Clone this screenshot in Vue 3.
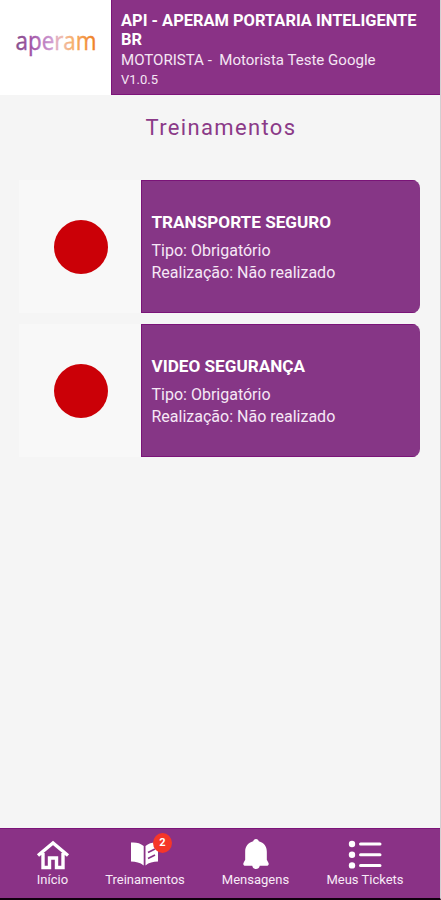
<template>
  <div class="screen">
    <header class="header">
      <div class="logo">
        <svg width="84" height="40" viewBox="0 0 84 40" role="img" aria-label="aperam">
          <defs>
            <linearGradient id="brand" gradientUnits="userSpaceOnUse" x1="1" y1="0" x2="82" y2="0">
              <stop offset="0" stop-color="#87528a" />
              <stop offset="0.2" stop-color="#a052a6" />
              <stop offset="0.45" stop-color="#cf9bd2" />
              <stop offset="0.58" stop-color="#efbcae" />
              <stop offset="0.72" stop-color="#f7b06a" />
              <stop offset="1" stop-color="#ee7c22" />
            </linearGradient>
          </defs>
          <text class="brand" x="1.500" y="28" textLength="81" lengthAdjust="spacingAndGlyphs">aperam</text>
        </svg>
      </div>
      <div class="info">
        <h1>API - APERAM PORTARIA INTELIGENTE BR</h1>
        <p class="user">MOTORISTA -&nbsp; Motorista Teste Google</p>
        <p class="version">V1.0.5</p>
      </div>
    </header>

    <main class="content">
      <h2>Treinamentos</h2>
      <div class="card" v-for="item in trainings" :key="item.title">
        <div class="status"><span class="dot"></span></div>
        <div class="details">
          <h3>{{ item.title }}</h3>
          <p>Tipo: {{ item.type }}</p>
          <p>Realização: {{ item.status }}</p>
        </div>
      </div>
    </main>

    <nav class="tabs">
      <a class="tab home">
        <svg width="34" height="32" viewBox="0 0 34 32">
          <path d="M2 16.500 17 4l15 12.500M7 14v14.500h6.500v-9.500h7v9.500H27V14" fill="none" stroke="#fff" stroke-width="3.400" />
        </svg>
        <span>Início</span>
      </a>
      <a class="tab trainings">
        <svg width="34" height="32" viewBox="0 0 34 32">
          <path d="M3 3.500C8 3 12 4 15.700 7v19.500C12 23.500 8 22.500 3 22.500zM17.500 7C21 4 25 3 30 3.500v19c-5 0-9 1-12.500 4z" fill="#fff" />
          <path d="m20 13.500 7-3.500M20 19.500l7-3.500" stroke="#8a3286" stroke-width="1.800" />
        </svg>
        <b class="badge">2</b>
        <span>Treinamentos</span>
      </a>
      <a class="tab messages">
        <svg width="34" height="34" viewBox="0 0 34 34">
          <path d="M17 0c1.700 0 2.700 1 3 2.500 5.500 1.500 8.500 5.500 8.500 11V22l1.800 3.500c.6 1.800-.2 3-2 3h-7.300C20.500 31 19 32 17 32s-3.500-1-4-3.500H5.700c-1.800 0-2.600-1.200-2-3L5.500 22v-8.500C5.500 8 8.500 4 14 2.500 14.300 1 15.300 0 17 0z" fill="#fff" />
        </svg>
        <span>Mensagens</span>
      </a>
      <a class="tab tickets">
        <svg width="34" height="32" viewBox="0 0 34 32">
          <g fill="#fff">
            <circle cx="4" cy="5" r="3.200" />
            <circle cx="4" cy="15.700" r="3.200" />
            <circle cx="4" cy="26.400" r="3.200" />
          </g>
          <path d="M12.500 5h19.500M12.500 15.700h19.500M12.500 26.400h19.500" stroke="#fff" stroke-width="3" stroke-linecap="round" />
        </svg>
        <span>Meus Tickets</span>
      </a>
    </nav>
  </div>
</template>

<script setup>
const trainings = [
  { title: 'TRANSPORTE SEGURO', type: 'Obrigatório', status: 'Não realizado' },
  { title: 'VIDEO SEGURANÇA', type: 'Obrigatório', status: 'Não realizado' }
]
</script>

<style>
body { background: #f5f5f5; }
</style>

<style scoped>
.screen {
  box-sizing: border-box;
  width: 441px; height: 900px;
  display: flex; flex-direction: column;
  background: #f5f5f5;
  border-right: 1px solid #d2d0d2;
  border-bottom: 2px solid #10000f;
  font-family: Roboto, sans-serif;
  overflow: hidden;
}
h1, h2, h3, p { margin: 0; }
.header { display: flex; height: 95px; flex: none; }
.logo {
  width: 111px;
  display: flex; justify-content: center;
  padding-top: 22px; box-sizing: border-box;
  background: #fff;
}
.logo svg { overflow: visible; }
.brand {
  font-family: "Open Sans", sans-serif;
  font-size: 25px; font-weight: 400;
  fill: url(#brand);
  stroke: url(#brand); stroke-width: 0.4px;
}
.info {
  flex: 1; box-sizing: border-box;
  padding: 11px 10px 0 9px;
  background: #8a3286; color: #fff;
  border: solid #7c1479; border-width: 0 0 1px 1px;
}
h1 { font-size: 16.45px; line-height: 19px; font-weight: 700; }
.user { font-size: 15.05px; line-height: 20px; margin-top: 1px; color: #f5e6f4; }
.version { font-size: 13px; line-height: 19px; color: #f5e6f4; }

.content { flex: 1; padding: 0 20px 0 19px; }
h2 {
  height: 85px; line-height: 66px; padding-left: 3px;
  box-sizing: border-box;
  font-size: 22px; font-weight: 400; letter-spacing: 1.35px;
  text-align: center; color: #8b3a88;
}
.card {
  display: flex; height: 133px; margin-bottom: 11px;
  border-radius: 0 8px 8px 0; overflow: hidden;
}
.status {
  width: 122px; flex: none;
  display: flex; align-items: center; justify-content: center;
  background: #f8f8f8;
}
.dot { width: 54px; height: 54px; margin-left: 2px; border-radius: 50%; background: #cb0007; }
.details {
  flex: 1; padding: 31px 10px 0 9.500px;
  background: #863686; color: #f6e8f6;
  border: solid #7a1478; border-width: 1px 0 1px 1px;
}
.details h3 { font-size: 17.15px; line-height: 21px; margin-bottom: 6.5px; color: #fff; }
.details p { font-size: 16px; line-height: 22.5px; }

.tabs {
  flex: none; height: 70px; box-sizing: border-box;
  display: flex;
  background: #8a3286; border-top: 1px solid #7c1479;
}
.tab {
  position: relative;
  display: flex; flex-direction: column; align-items: center;
  padding-top: 10px; color: #f8eaf7;
}
.tab svg { height: 32px; }
.tab span { font-size: 13px; line-height: 18px; white-space: nowrap; }
.home { width: 105px; }
.trainings { width: 80px; }
.messages { width: 141px; }
.tickets { width: 78px; }
.badge {
  position: absolute; left: 48px; top: 4px;
  width: 19px; height: 20px; border-radius: 50%;
  background: #f53629; color: #fff;
  font-size: 11px; line-height: 20px; text-align: center;
}
</style>
